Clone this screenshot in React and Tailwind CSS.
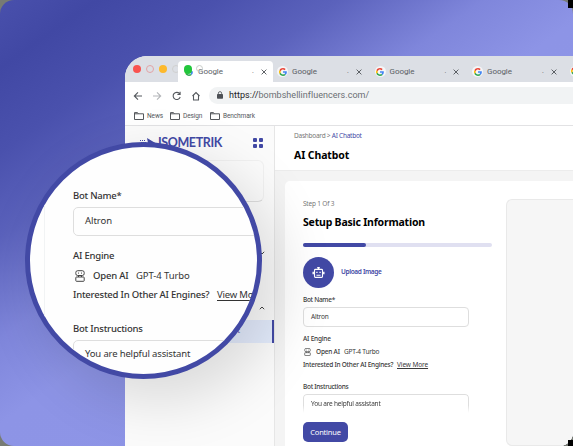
import React from "react";

const Google = () => (
  <svg viewBox="0 0 48 48" className="h-[8px] w-[8px]">
    <path fill="#EA4335" d="M24 9.500c3.500 0 6.700 1.200 9.200 3.600l6.900-6.900C35.900 2.400 30.500 0 24 0 14.600 0 6.500 5.400 2.600 13.200l8 6.200C12.400 13.700 17.700 9.500 24 9.500z" />
    <path fill="#4285F4" d="M47 24.500c0-1.600-.2-3.100-.4-4.500H24v9h12.900c-.6 3-2.200 5.500-4.700 7.200l7.700 6C44.400 38 47 31.800 47 24.500z" />
    <path fill="#FBBC05" d="M10.500 28.600c-.5-1.500-.8-3-.8-4.600s.3-3.100.8-4.600l-8-6.200C1 16.500 0 20.100 0 24s1 7.500 2.600 10.800l7.900-6.200z" />
    <path fill="#34A853" d="M24 48c6.500 0 11.900-2.100 15.900-5.800l-7.700-6c-2.200 1.500-4.900 2.300-8.200 2.300-6.300 0-11.600-4.200-13.500-9.900l-8 6.200C6.500 42.600 14.600 48 24 48z" />
  </svg>
);

const Close = () => (
  <svg viewBox="0 0 6 6" className="h-[6px] w-[6px]" stroke="#4d5156" strokeWidth=".9">
    <path d="M.6.6l4.800 4.800M5.400.6L.6 5.400" />
  </svg>
);

const Tab = ({ cls }) => (
  <div className={"flex h-[26px] w-[97.500px] shrink-0 items-center pt-[5px] " + cls}>
    <span className="grid h-[11px] w-[11px] place-items-center rounded-full bg-white/70"><Google /></span>
    <span className="ml-[4px] w-[25px] whitespace-nowrap text-[8px] leading-[10px] tracking-[-0.050px] text-[#5a5e64]">Google</span>
    <span className="ml-[30px] mr-[7px] text-[7px] text-[#5a5e64]">.</span>
    <Close />
  </div>
);

const Folder = ({ name, cls }) => (
  <div className="flex items-center">
    <svg viewBox="0 0 10 8" className="h-[8px] w-[10px]" fill="none" stroke="#55585c" strokeWidth="1">
      <path d="M.5 7.500V.6h3l1 1.200h5v5.700zM.5 1.800h4" />
    </svg>
    <span className={"ml-[3px] whitespace-nowrap text-[6.500px] leading-[8px] tracking-[-0.100px] text-[#55585c] " + cls}>{name}</span>
  </div>
);

const Engine = ({ className }) => (
  <svg viewBox="0 0 10 12" className={className} fill="none" stroke="#444" strokeWidth="1">
    <rect x=".8" y=".7" width="8.400" height="4.800" rx="1.900" />
    <path d="M3 3.100h1M6 3.100h1M3.500 5.500v1.500M6.500 5.500v1.500" />
    <rect x=".8" y="7" width="8.400" height="4.300" rx=".7" />
  </svg>
);

const Robot = () => (
  <svg viewBox="0 0 14 14" className="h-[13px] w-[13px]" fill="none" stroke="#fff" strokeWidth="1.200">
    <rect x="2.700" y="3.600" width="8.600" height="8.600" rx="1" />
    <path d="M7 3.600V2M4.800 9.900h4.400" />
    <path d="M1.300 6.300v2.700M12.700 6.300v2.700" strokeWidth="1.600" />
    <path d="M4.600 6.900h1.400M8 6.900h1.400" strokeWidth="1.400" />
    <path d="M5.600 1.900h2.800" strokeWidth="1.600" />
  </svg>
);

const TabBar = () => (
  <div className="flex h-[26px] bg-[#dcdfe5]">
    <div className="flex w-[53px] shrink-0 items-center gap-[5px] pl-[8px]">
      <i className="h-[8px] w-[8px] shrink-0 rounded-full bg-[#f9534f]" />
      <i className="h-[8px] w-[8px] shrink-0 rounded-full border border-[#e2a3a6]" />
      <i className="h-[8px] w-[8px] shrink-0 rounded-full bg-[#fdb92c]" />
      <i className="h-[8px] w-[8px] shrink-0 rounded-full border border-[#d0d0cf]" />
    </div>
    <div className="mr-[4px] mt-[5px] flex h-[21px] w-[95px] shrink-0 items-center rounded-t-[4px] bg-white pl-[5px]">
      <span className="relative grid h-[11px] w-[11px] place-items-center">
        <Google />
        <i className="absolute left-[1px] top-[-1px] h-[9px] w-[8px] rounded-full bg-[#22c63c]" />
        <i className="absolute left-[13px] top-[-1px] h-[7px] w-[7px] rounded-full border border-[#c9cdc9]" />
      </span>
      <span className="ml-[4px] w-[25px] whitespace-nowrap text-[8px] leading-[10px] tracking-[-0.050px] text-[#5a5e64]">Google</span>
      <span className="ml-[29px] mr-[7px] text-[7px] text-[#5a5e64]">.</span>
      <Close />
    </div>
    <div className="flex shrink-0 border-[#c9ccd3]">
      <Tab cls="" />
      <Tab cls="" />
      <Tab cls="" />
    </div>
    <div className="flex h-[26px] flex-1 items-center overflow-hidden pt-[4px]">
      <span className="grid h-[11px] w-[11px] shrink-0 place-items-center rounded-full bg-white/70"><Google /></span>
    </div>
  </div>
);

const Toolbar = () => (
  <div className="flex h-[26px] items-center pl-[8px]">
    <svg viewBox="0 0 70 12" className="h-[12px] w-[70px] translate-y-[1px]" fill="none" stroke="#55595e" strokeWidth="1.100">
      <path d="M9 6H1.500M5 2.300L1.300 6 5 9.700" />
      <path stroke="#b4b6b9" d="M20 6h7.500M24 2.300L27.700 6 24 9.700" />
      <path d="M46.500 3.600A3.600 3.600 0 1 0 47.200 7M47.100 1.800v2.700h-2.700" />
      <path d="M59.500 6L63 2.500 66.500 6M60.500 5.500V10h5V5.500" />
    </svg>
    <div className="ml-[6px] flex h-[17px] flex-1 items-center rounded-l-full bg-[#f1f3f4] pl-[8px]">
      <svg viewBox="0 0 6 8" className="h-[8px] w-[6px]">
        <rect y="3" width="6" height="4.800" rx=".7" fill="#4c5055" />
        <path d="M1.400 3.500V2.200a1.600 1.600 0 0 1 3.200 0v1.300" fill="none" stroke="#4c5055" strokeWidth=".8" />
      </svg>
      <span className="ml-[6px] whitespace-nowrap text-[9px] leading-[12px] tracking-[0.030px] text-[#6a6e73]"><span className="text-[#202124]">https://</span>bombshellinfluencers.com/</span>
    </div>
  </div>
);

const Sidebar = () => (
  <aside className="flex w-[150px] shrink-0 flex-col border-r border-[#e6e6e6] bg-[#fbfbfb]">
    <div className="flex h-[34px] items-center pl-[14px]">
      <svg viewBox="0 0 19 12" className="h-[12px] w-[19px]" fill="#4249a5">
        <path d="M8 1l10 6-2 4H4l5-5zM1 3h1v1H1zM3 3h1v1H3zM5 3h1v1H5zM2 5h1v1H2zM4 5h1v1H4zM6 5h1v1H6z" />
      </svg>
      <span className="w-[77px] whitespace-nowrap font-['Lato','Noto_Sans',sans-serif] text-[12.500px] font-bold leading-[14px] tracking-[-0.400px] text-[#4249a5]">ISOMETRIK</span>
      <div className="ml-[18px] grid grid-cols-2 gap-[2px]">
        <i className="h-[4px] w-[4px] rounded-[1px] bg-[#4249a5]" />
        <i className="h-[4px] w-[4px] rounded-[1px] bg-[#4249a5]" />
        <i className="h-[4px] w-[4px] rounded-[1px] bg-[#4249a5]" />
        <i className="h-[4px] w-[4px] rounded-[1px] bg-[#4249a5]" />
      </div>
    </div>
    <div className="ml-[14px] h-[42px] w-[125px] rounded-[6px] border border-[#f1f1f1] border-b-[#dedede]" />
    <div className="flex h-[108px] flex-col items-end justify-between pr-[9px] pt-[49px] text-[#444]">
      <svg viewBox="0 0 6 4" className="h-[4px] w-[6px]" fill="none" stroke="currentColor"><path d="M.8.8L3 3 5.200.8" /></svg>
      <svg viewBox="0 0 6 4" className="h-[4px] w-[6px]" fill="none" stroke="currentColor"><path d="M.8 3.200L3 1l2.200 2.200" /></svg>
    </div>
    <div className="mt-[10px] flex h-[23px] items-center justify-end border-r-2 border-[#4249a5] bg-[#e4ecfd] pr-[32px] text-[7px] text-[#4249a5]">AI Chatbot</div>
  </aside>
);

const Form = () => (
  <div className="flex w-[221px] shrink-0 flex-col pl-[18px] pt-[18px] tracking-[-0.200px] text-[#3a3a3a]">
    <p className="h-[9px] whitespace-nowrap text-[6.500px] leading-[9px] text-[#777]">Step 1 Of 3</p>
    <h2 className="mt-[6px] h-[16px] whitespace-nowrap text-[10.500px] font-bold leading-[16px] text-black">Setup Basic Information</h2>
    <div className="mt-[13px] h-[4px] w-[189px] rounded-full bg-[#e0e0f1]">
      <div className="h-full w-[63px] rounded-full bg-[#4249a5]" />
    </div>
    <div className="mt-[10px] flex h-[30px] items-center">
      <span className="grid h-[31px] w-[31px] place-items-center rounded-full bg-[#4249a5]"><Robot /></span>
      <span className="ml-[7px] whitespace-nowrap text-[6.500px] font-semibold leading-[10px] tracking-[-0.350px] text-[#4249a5]">Upload Image</span>
    </div>
    <p className="mt-[8px] h-[10px] whitespace-nowrap text-[6.500px] font-medium leading-[10px] tracking-[-0.300px]">Bot Name*</p>
    <div className="mt-[2px] h-[20px] w-[166px] rounded-[4px] border border-[#dedede] pl-[7px] text-[6.500px] leading-[18px]">Altron</div>
    <p className="mt-[7px] h-[10px] whitespace-nowrap text-[6.500px] font-medium leading-[10px]">AI Engine</p>
    <div className="mt-[3px] flex h-[9px] items-center whitespace-nowrap text-[6.500px] leading-[9px]">
      <Engine className="ml-[1px] h-[8px] w-[7px]" />
      <span className="ml-[5px] w-[28px] font-medium">Open AI</span>
      <span>GPT-4 Turbo</span>
    </div>
    <div className="mt-[4px] flex h-[10px] whitespace-nowrap text-[6.500px] leading-[9px]">
      <span className="w-[94px] font-medium tracking-[-0.240px]">Interested In Other AI Engines?</span>
      <span className="tracking-[-0.100px] underline underline-offset-1">View More</span>
    </div>
    <p className="mt-[12px] h-[10px] whitespace-nowrap text-[6.500px] font-medium leading-[10px] tracking-[-0.280px]">Bot Instructions</p>
    <div className="mt-[2px] h-[19px] w-[166px] rounded-t-[4px] border border-b-0 border-[#dedede] pl-[7px] text-[6.500px] leading-[18px] [mask-image:linear-gradient(black_60%,transparent)]">You are helpful assistant</div>
    <div className="mt-[9px] grid h-[20px] w-[45px] place-items-center rounded-[5px] bg-[#4249a5] text-[7.500px] leading-[12px] text-white">Continue</div>
  </div>
);

const Lens = () => (
  <div className="absolute left-[25px] top-[142px] h-[237px] w-[237px] overflow-hidden rounded-full border-[5px] border-[#4249a5] bg-[#fefefe] text-[#333]">
    <div className="ml-[14px] flex h-full w-[230px] flex-col border-l border-[#f1f3f4] pl-[28px] pt-[41px] tracking-[-0.200px]">
      <p className="h-[16px] whitespace-nowrap text-[9.500px] font-medium leading-[16px] tracking-[-0.250px]">Bot Name*</p>
      <div className="mt-[3px] h-[29px] w-[240px] shrink-0 rounded-[5px] border border-[#dedede] pl-[11px] text-[9.500px] leading-[26px] tracking-[-0.050px]">Altron</div>
      <p className="mt-[12px] h-[16px] whitespace-nowrap text-[9.500px] font-medium leading-[16px]">AI Engine</p>
      <div className="mt-[4px] flex h-[16px] items-center whitespace-nowrap text-[9.500px] leading-[16px]">
        <Engine className="ml-[2px] h-[12px] w-[10px]" />
        <span className="ml-[8px] w-[43px] font-medium">Open AI</span>
        <span className="tracking-[-0.100px]">GPT-4 Turbo</span>
      </div>
      <div className="mt-[3px] flex h-[16px] whitespace-nowrap text-[9.500px] leading-[16px]">
        <span className="w-[144px] shrink-0 font-medium">Interested In Other AI Engines?</span>
        <span className="underline underline-offset-2">View More</span>
      </div>
      <p className="mt-[18px] h-[16px] whitespace-nowrap text-[9.500px] font-medium leading-[16px]">Bot Instructions</p>
      <div className="mt-[3px] h-[60px] w-[240px] shrink-0 rounded-[5px] border border-[#dedede] pl-[11px] text-[9.500px] leading-[26px] tracking-[-0.150px]">You are helpful assistant</div>
    </div>
  </div>
);

export default function App() {
  return (
    <div className="relative h-[446px] w-[573px] overflow-hidden bg-[#777b74] font-['Noto_Sans',sans-serif]">
      <i className="absolute right-0 top-0 h-[8px] w-[5px] bg-black" />
      <i className="absolute bottom-0 right-0 z-10 h-[6px] w-[5px] bg-black" />
      <div className="h-full w-full overflow-hidden rounded-[14px] bg-[linear-gradient(145deg,#4950ac_0%,#4148a4_8%,#4a51ad_18%,#5b62bc_28%,#7f86db_40%,#8d94e6_50%,#8f96e7_100%)] pl-[125px] pt-[56px]">
        <div className="relative flex h-[390px] w-[448px] flex-col overflow-hidden rounded-tl-[22px] bg-white">
          <div className="shrink-0 font-['Roboto',sans-serif]">
            <TabBar />
            <Toolbar />
            <div className="flex h-[18px] items-center gap-[8px] border-b border-[#e2e2e4] pb-[2px] pl-[9px]">
              <Folder name="News" cls="w-[15px]" />
              <Folder name="Design" cls="w-[19px]" />
              <Folder name="Benchmark" cls="w-[32px]" />
            </div>
          </div>
          <div className="flex flex-1">
            <Sidebar />
            <main className="flex flex-1 flex-col bg-[#f4f4f4]">
              <header className="h-[45px] border-b border-[#ececec] bg-white pl-[19px] pt-[5px]">
                <p className="whitespace-nowrap text-[6.500px] leading-[10px] tracking-[-0.250px] text-[#777]">Dashboard &gt; <span className="text-[#4249a5]">AI Chatbot</span></p>
                <h1 className="mt-[6px] whitespace-nowrap text-[10.500px] font-bold leading-[16px] tracking-[-0.100px] text-black">AI Chatbot</h1>
              </header>
              <section className="ml-[10px] mt-[10px] flex flex-1 rounded-tl-[5px] bg-white">
                <Form />
                <div className="mt-[18px] flex-1 rounded-l-[6px] border border-r-0 border-[#e9e9e9] bg-[#f6f6f6]" />
              </section>
            </main>
          </div>
        </div>
      </div>
      <div className="absolute left-[45px] top-[162px] h-[200px] w-[200px] rounded-full shadow-[14px_18px_56px_22px_rgba(0,0,0,0.13)]" />
      <Lens />
    </div>
  );
}
